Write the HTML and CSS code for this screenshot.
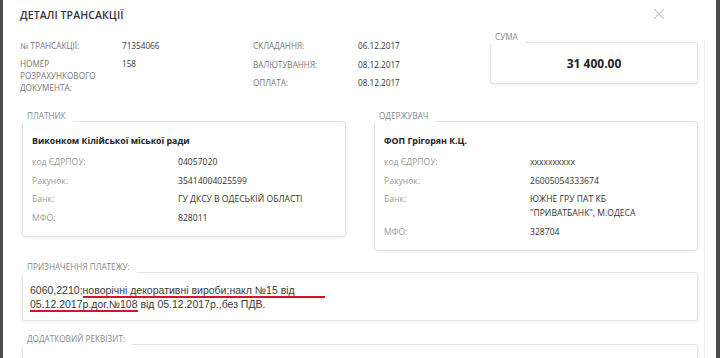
FILE: index.html
```html
<!DOCTYPE html>
<html lang="uk">
<head>
  <meta charset="UTF-8" />
  <meta name="viewport" content="width=device-width, initial-scale=1.0"/>
  <title>Деталі трансакції</title>
  <link rel="stylesheet" href="styles.css">
</head>
<body>

  <div class="modal">
    <div class="content">
      <div class="header">
        <h1 class="title">ДЕТАЛІ ТРАНСАКЦІЇ</h1>
        <svg class="close" width="12" height="12" viewBox="0 0 12 12">
          <path d="M1 1 L11 11 M11 1 L1 11" stroke="#c8c8c8" stroke-width="1.2" fill="none"/>
        </svg>
      </div>

      <div class="summary">
        <div class="info info-left">
          <div class="info-label">№ ТРАНСАКЦІЇ:</div>
          <div class="info-value">71354066</div>
          <div class="info-label">НОМЕР<br>РОЗРАХУНКОВОГО<br>ДОКУМЕНТА:</div>
          <div class="info-value">158</div>
        </div>
        <div class="info info-right">
          <div class="info-label">СКЛАДАННЯ:</div>
          <div class="info-value">06.12.2017</div>
          <div class="info-label">ВАЛЮТУВАННЯ:</div>
          <div class="info-value">08.12.2017</div>
          <div class="info-label">ОПЛАТА:</div>
          <div class="info-value">08.12.2017</div>
        </div>
        <div class="group group-sum">
          <div class="legend">СУМА</div>
          <div class="box sum-box">31 400.00</div>
        </div>
      </div>

      <div class="parties">
        <div class="group">
          <div class="legend">ПЛАТНИК</div>
          <div class="box party">
            <div class="party-name">Виконком Кілійської міської ради</div>
            <div class="party-rows">
              <div class="row-label">код ЄДРПОУ:</div>
              <div class="row-value">04057020</div>
              <div class="row-label">Рахунок:</div>
              <div class="row-value">35414004025599</div>
              <div class="row-label">Банк:</div>
              <div class="row-value">ГУ ДКСУ В ОДЕСЬКІЙ ОБЛАСТІ</div>
              <div class="row-label">МФО:</div>
              <div class="row-value">828011</div>
            </div>
          </div>
        </div>
        <div class="group">
          <div class="legend">ОДЕРЖУВАЧ</div>
          <div class="box party">
            <div class="party-name">ФОП Грігорян К.Ц.</div>
            <div class="party-rows">
              <div class="row-label">код ЄДРПОУ:</div>
              <div class="row-value">xxxxxxxxxx</div>
              <div class="row-label">Рахунок:</div>
              <div class="row-value">26005054333674</div>
              <div class="row-label">Банк:</div>
              <div class="row-value">ЮЖНЕ ГРУ ПАТ КБ<br>"ПРИВАТБАНК", М.ОДЕСА</div>
              <div class="row-label">МФО:</div>
              <div class="row-value">328704</div>
            </div>
          </div>
        </div>
      </div>

      <div class="group group-purpose">
        <div class="legend">ПРИЗНАЧЕННЯ ПЛАТЕЖУ:</div>
        <div class="box purpose">
          6060,2210;<span class="mark mark-long">новорічні декоративні вироби;накл №15 від</span><br><span class="mark">05.12.2017р.дог.№108</span> від 05.12.2017р.,без ПДВ.
        </div>
      </div>

      <div class="group group-extra">
        <div class="legend">ДОДАТКОВИЙ РЕКВІЗИТ:</div>
        <div class="box extra"></div>
      </div>
    </div>
    <div class="scrollbar"></div>
  </div>

</body>
</html>
```

FILE: styles.css
```css
body {
    margin: 0;
    background: #4b4b4b;
    font-family: 'Open Sans', 'Noto Sans', sans-serif;
    color: #333;
    height: 358px;
    overflow: hidden;
}
.modal {
    margin-left: 3px;
    width: 713px;
    height: 358px;
    background: #fff;
    display: flex;
    overflow: hidden;
}
.content {
    flex: 1;
    padding: 0 6px 0 19px;
}
.scrollbar {
    width: 12px;
    margin-top: 40px;
    border-left: 1px solid #f1f1f1;
}
.header {
    height: 30px;
    display: flex;
    justify-content: space-between;
    align-items: center;
    margin-left: -2px;
}
.title {
    margin: 0;
    font-size: 10.5px;
    font-weight: 600;
    color: #333;
    letter-spacing: 0.1px;
}
.close {
    margin-right: 33px;
    margin-top: -2px;
}

/* верхній блок */
.summary {
    display: flex;
    margin-left: -2px;
}
.info {
    display: grid;
    padding-top: 10px;
    font-size: 8.2px;
    line-height: 12px;
    align-content: start;
}
.info-left {
    grid-template-columns: 102px 131px;
    row-gap: 6px;
}
.info-right {
    grid-template-columns: 105px 130px;
    row-gap: 6.5px;
}
.info-label {
    color: #777;
}
.info-value {
    color: #333;
}

/* групи з легендою */
.group {
    display: flex;
    flex-direction: column;
}
.legend {
    align-self: flex-start;
    position: relative;
    z-index: 1;
    background: #fff;
    font-size: 8.2px;
    line-height: 10px;
    padding: 0 7px 2px 5px;
    margin-bottom: -2px;
    color: #888;
}
.box {
    border: 1px solid #e3e3e3;
    border-radius: 3px;
    box-shadow: 0 1px 3px rgba(0, 0, 0, 0.07);
    background: #fff;
}
.group-sum {
    width: 208px;
    padding-top: 2px;
    margin-left: 2px;
}
.sum-box {
    height: 40px;
    display: flex;
    justify-content: center;
    align-items: center;
    font-size: 12px;
    font-weight: 700;
    color: #222;
}

/* платник / одержувач */
.parties {
    display: flex;
    gap: 28px;
    margin-top: 17px;
    align-items: flex-start;
}
.parties .group {
    width: 324px;
}
.party {
    padding: 12px 10px 11px 9px;
}
.party-name {
    font-size: 8.8px;
    font-weight: 700;
    line-height: 14px;
    color: #222;
}
.party-rows {
    display: grid;
    grid-template-columns: 146px 1fr;
    row-gap: 4.5px;
    margin-top: 7px;
    font-size: 8.6px;
    line-height: 14px;
}
.row-label {
    color: #999;
}
.row-value {
    color: #333;
}

/* призначення платежу */
.group-purpose {
    margin-top: 11px;
}
.purpose {
    padding: 10px 8px 9px 7px;
    font-family: 'Liberation Sans', Arial, sans-serif;
    font-size: 10.5px;
    line-height: 14px;
    color: #3a3a3a;
}
.mark {
    border-bottom: 2px solid #d4142f;
}
.mark-long {
    padding-right: 30px;
}
.group-extra {
    margin-top: 13px;
}
.extra {
    height: 40px;
}
```
